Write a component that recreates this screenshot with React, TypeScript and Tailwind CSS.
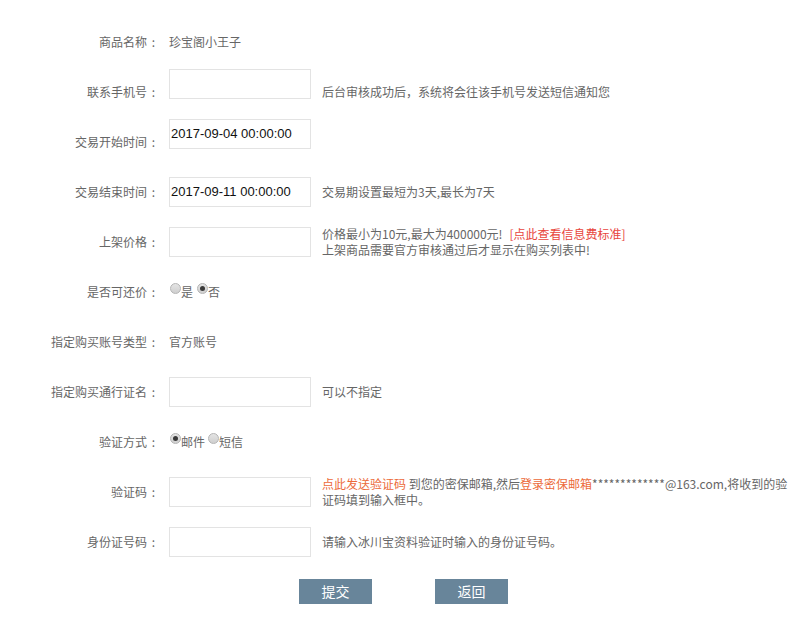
import React from "react";

const font = { fontFamily: '"Noto Sans CJK SC", "Microsoft YaHei", sans-serif' };

function Label({ children }: { children: React.ReactNode }) {
  return (
    <div className="flex w-[160px] shrink-0 justify-end text-[12px] text-[#666]">
      <span>{children}</span>
      <span className="inline-block w-[13px] text-center">:</span>
    </div>
  );
}

function Input({ value, up }: { value?: string; up?: boolean }) {
  return (
    <div
      className={
        "ml-[9px] flex h-[30px] w-[142px] shrink-0 items-center border border-[#e3e3e3] bg-white pl-[1px] text-[13px] text-[#111] " +
        (up ? "mb-4" : "")
      }
      style={value ? { fontFamily: '"Liberation Sans", Arial, sans-serif' } : undefined}
    >
      {value}
    </div>
  );
}

function Radio({ checked }: { checked?: boolean }) {
  return (
    <span className="mb-[8px] ml-[1px] flex h-[11px] w-[11px] shrink-0 items-center justify-center rounded-full border border-[#b4b4b4] bg-gradient-to-b from-[#e4e4e4] to-[#cfcfcf]">
      {checked && <span className="h-[5px] w-[5px] rounded-full bg-[#3a3a3a]" />}
    </span>
  );
}

function Hint({ children }: { children: React.ReactNode }) {
  return <div className="ml-[11px] text-[12px] leading-[16px] text-[#666]">{children}</div>;
}

function Row({ children }: { children: React.ReactNode }) {
  return <div className="flex h-[50px] items-center">{children}</div>;
}

export default function App() {
  return (
    <div className="min-h-[639px] w-[797px] bg-white pt-[17px]" style={font}>
      <Row>
        <Label>商品名称</Label>
        <div className="ml-[9px] text-[12px] text-[#666]">珍宝阁小王子</div>
      </Row>
      <Row>
        <Label>联系手机号</Label>
        <Input up />
        <Hint>后台审核成功后，系统将会往该手机号发送短信通知您</Hint>
      </Row>
      <Row>
        <Label>交易开始时间</Label>
        <Input value="2017-09-04 00:00:00" up />
      </Row>
      <Row>
        <Label>交易结束时间</Label>
        <Input value="2017-09-11 00:00:00" />
        <Hint>交易期设置最短为3天,最长为7天</Hint>
      </Row>
      <Row>
        <Label>上架价格</Label>
        <Input />
        <Hint>
          <div>
            价格最小为10元,最大为400000元!
            <span className="ml-[7px] text-[#e8453c]">[点此查看信息费标准]</span>
          </div>
          <div>上架商品需要官方审核通过后才显示在购买列表中!</div>
        </Hint>
      </Row>
      <Row>
        <Label>是否可还价</Label>
        <div className="ml-[9px] flex items-center text-[12px] text-[#666]">
          <Radio />
          <span>是</span>
          <span className="ml-[3px]" />
          <Radio checked />
          <span>否</span>
        </div>
      </Row>
      <Row>
        <Label>指定购买账号类型</Label>
        <div className="ml-[9px] text-[12px] text-[#666]">官方账号</div>
      </Row>
      <Row>
        <Label>指定购买通行证名</Label>
        <Input />
        <Hint>可以不指定</Hint>
      </Row>
      <Row>
        <Label>验证方式</Label>
        <div className="ml-[9px] flex items-center text-[12px] text-[#666]">
          <Radio checked />
          <span>邮件</span>
          <span className="ml-[2px]" />
          <Radio />
          <span>短信</span>
        </div>
      </Row>
      <Row>
        <Label>验证码</Label>
        <Input />
        <Hint>
          <div className="whitespace-nowrap">
            <span className="text-[#ec6a3a]">点此发送验证码</span> 到您的密保邮箱,然后
            <span className="text-[#ec6a3a]">登录密保邮箱</span>*************@163.com,将收到的验
          </div>
          <div>证码填到输入框中。</div>
        </Hint>
      </Row>
      <Row>
        <Label>身份证号码</Label>
        <Input />
        <Hint>请输入冰川宝资料验证时输入的身份证号码。</Hint>
      </Row>
      <div className="mt-[12px] flex gap-[63px] pl-[299px]">
        <button className="flex h-[25px] w-[73px] items-center justify-center bg-[#68859a] text-[14px] text-white">
          提交
        </button>
        <button className="flex h-[25px] w-[73px] items-center justify-center bg-[#68859a] text-[14px] text-white">
          返回
        </button>
      </div>
    </div>
  );
}
